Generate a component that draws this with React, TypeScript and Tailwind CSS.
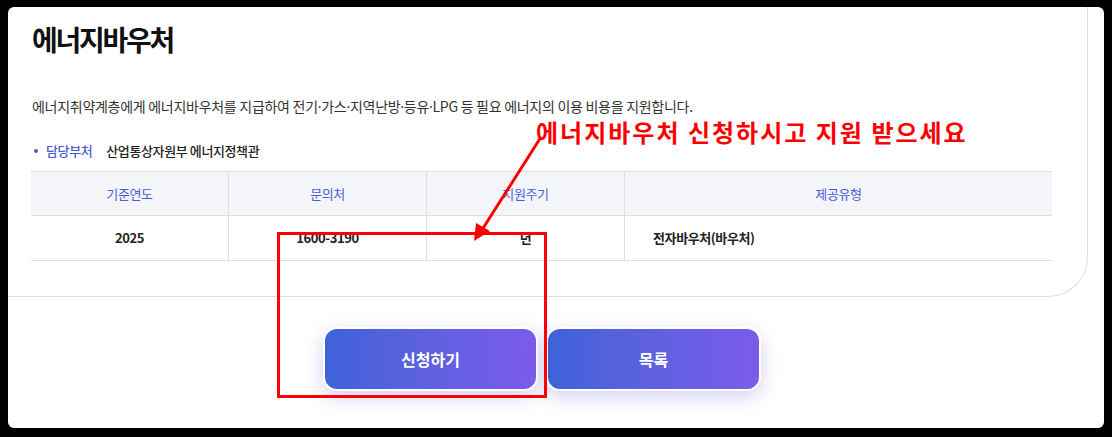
const font = { fontFamily: '"Noto Sans CJK KR", "Noto Sans", sans-serif' }

const cols = [
	{ head: '기준연도', body: '2025', w: 'w-[197px]', align: 'justify-center' },
	{ head: '문의처', body: '1600-3190', w: 'w-[198px]', align: 'justify-center' },
	{ head: '지원주기', body: '년', w: 'w-[198px]', align: 'justify-center' },
	{ head: '제공유형', body: '전자바우처(바우처)', w: 'flex-1', align: 'justify-start pl-[28px]' },
]

const Dot = () => <span style={{ fontFamily: '"Noto Sans", sans-serif' }}>·</span>

export default function App() {
	return (
		<div className="bg-black w-[1112px] h-[437px] pt-[7px] pl-[8px] pr-[8px] pb-[9px]" style={font}>
			<div className="relative bg-white w-full h-full rounded-[6px] overflow-hidden">
				{/* card */}
				<div className="w-[1080px] h-[290px] border-r border-b border-[#dedede] rounded-br-[40px] pl-[24px] pt-[14px]">
					<h1 className="text-[28px] font-bold text-[#111] tracking-[-0.08em] leading-[36px]">에너지바우처</h1>
					<p className="mt-[39px] text-[14px] text-[#333] tracking-[-0.02em] leading-[20px]">
						에너지취약계층에게 에너지바우처를 지급하여 전기<Dot />가스<Dot />지역난방<Dot />등유<Dot />LPG 등 필요 에너지의 이용 비용을 지원합니다.
					</p>
					<div className="mt-[24px] flex items-center text-[13px] leading-[20px] tracking-[-0.03em]">
						<span className="w-[4px] h-[4px] rounded-full bg-[#4b5bd6] ml-[2px] mr-[8px]" />
						<span className="text-[#4b5bd6] font-medium">담당부처</span>
						<span className="ml-[14px] font-medium text-[#222]">산업통상자원부 에너지정책관</span>
					</div>
					<div className="mt-[10px] ml-[-1px] w-[1021px] border-t border-[#dedede] text-[13px] tracking-[-0.03em]">
						<div className="flex h-[44px] bg-[#f4f5f9] border-b border-[#dedede]">
							{cols.map((c, i) => (
								<div key={i} className={`${c.w} flex items-center justify-center text-[#4b5bd6] ${i > 0 ? 'border-l border-[#dedede]' : ''}`}>
									{c.head}
								</div>
							))}
						</div>
						<div className="flex h-[45px] border-b border-[#dedede]">
							{cols.map((c, i) => (
								<div key={i} className={`${c.w} flex items-center ${c.align} font-bold text-[#222] ${i > 0 ? 'border-l border-[#dedede]' : ''}`}>
									{c.body}
								</div>
							))}
						</div>
					</div>
				</div>

				{/* buttons */}
				<div className="mt-[30px] ml-[315px] flex gap-[8px]">
					{['신청하기', '목록'].map((t) => (
						<button
							key={t}
							className="w-[215px] h-[64px] rounded-[14px] border-2 border-white bg-gradient-to-r from-[#3d63d8] to-[#7a5ce9] text-white text-[16px] font-bold shadow-[0_6px_18px_rgba(110,100,210,0.3)]"
						>
							{t}
						</button>
					))}
				</div>

				{/* annotation */}
				<div className="absolute left-[528px] top-[110px] text-[24px] font-bold text-[#ff0000] tracking-[2px] leading-[30px] whitespace-nowrap">
					에너지바우처 신청하시고 지원 받으세요
				</div>
				<svg className="absolute left-0 top-0" width="1096" height="421">
					<line x1="533" y1="130" x2="472" y2="226" stroke="#ff0000" strokeWidth="3" />
					<polygon points="466,234 468,216 482,224" fill="#ff0000" />
				</svg>
				<div className="absolute left-[269px] top-[225px] w-[270px] h-[166px] border-[3px] border-[#ff0000]" />
			</div>
		</div>
	)
}
